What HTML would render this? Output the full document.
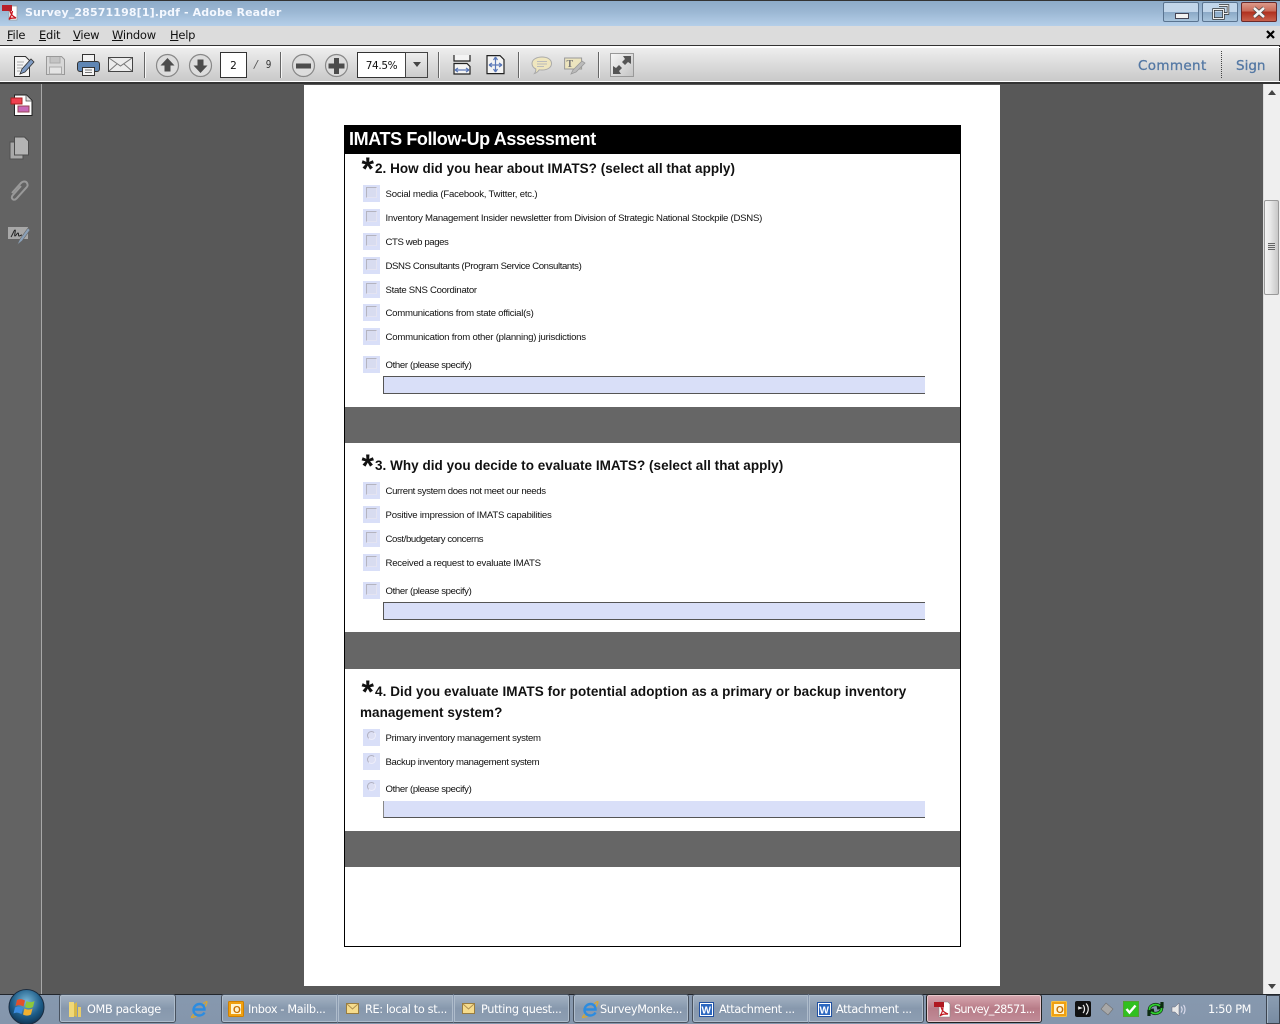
<!DOCTYPE html>
<html><head><meta charset="utf-8"><style>
html,body{margin:0;padding:0}
body{width:1280px;height:1024px;overflow:hidden;position:relative;background:#585858;font-family:"Liberation Sans",sans-serif}
.a,.t,.o,.q,.cb,.rb,.inp,.band,.tb,svg.i{position:absolute}
.t{white-space:nowrap}
.o{left:385.5px;font-size:9.6px;line-height:12px;color:#111;white-space:nowrap;letter-spacing:-.26px;margin-top:1px}
.q{font-size:13.5px;font-weight:bold;line-height:20px;color:#111;white-space:nowrap;letter-spacing:.03px;margin-top:1px}
.star{position:absolute;left:361.500px;font-size:32px;font-weight:bold;line-height:24px;color:#111}
.cb,.rb{left:363px;width:17px;height:17px;background:#d9dff8}
.cb:after{content:"";position:absolute;left:3px;top:2px;width:9px;height:9px;border:1px solid #b4b4c0;border-right-color:#e4e4f2;border-bottom-color:#e4e4f2;background:#d8dcf0}
.rb:after{content:"";position:absolute;left:4px;top:2px;width:7px;height:7px;border:1px solid #b0b0c0;border-right-color:#eeeefa;border-bottom-color:#eeeefa;border-radius:50%;background:#dde0f4}
.inp{left:383px;width:541px;height:16px;background:#d9dff8;border-left:1px solid #555;border-top:1px solid #555;border-bottom:1px solid #555}
.inp.n{border-top:0;height:16px;border-left-color:#888}
.band{left:345px;width:615px;background:#666}
.menu{top:28px;color:#111;font-family:"DejaVu Sans","Liberation Sans",sans-serif;font-size:11.5px;letter-spacing:-.25px}
.menu u{text-decoration:underline}
.tb{top:994px;height:29px;box-sizing:border-box;border:1px solid #48525f;border-radius:3px;background:linear-gradient(#a3b2c3,#8798ad 50%,#8d9eb2);box-shadow:inset 0 0 0 1px #aebccb;color:#fff;font-family:"DejaVu Sans",sans-serif;font-size:11.3px;line-height:29px;white-space:nowrap;letter-spacing:-.35px}
.tb span{position:absolute;top:0}
.sep{position:absolute;top:52px;height:26px;width:1px;background:#666;box-shadow:1px 0 0 #f6f6f6}
</style></head><body>
<!-- title bar -->
<div class="a" style="left:0;top:0;width:1280px;height:26px;background:linear-gradient(#8dabc9,#9ab6d2 40%,#b5cfe9);border-top:1px solid #333;box-sizing:border-box"></div>
<svg class="i" style="left:2px;top:4px" width="18" height="17" viewBox="0 0 18 17"><path d="M7 2h8v14H7z" fill="#fff" stroke="#999" stroke-width=".7"/><rect x="0" y="1" width="10" height="6" fill="#b8202a"/><path d="M8 7c1 3 2 5 6 7-3 0-6 0-7 1.500C9 12 10 10 10.500 7" fill="none" stroke="#c8141e" stroke-width="1.300"/></svg>
<div class="t" style="left:25px;top:5px;font:bold 11px/16px 'DejaVu Sans',sans-serif;color:#f4f8ff;letter-spacing:.13px">Survey_28571198[1].pdf - Adobe Reader</div>
<!-- window buttons -->
<div class="a" style="left:1163px;top:2px;width:36px;height:20px;box-sizing:border-box;border:1px solid #5a7490;border-radius:2px;background:linear-gradient(#c2d6ea 50%,#8aa8c6 50%,#a8c4dc)"></div>
<div class="a" style="left:1175px;top:13px;width:12px;height:4px;background:#f2f2f2;border:1px solid #445"></div>
<div class="a" style="left:1202px;top:2px;width:36px;height:20px;box-sizing:border-box;border:1px solid #5a7490;border-radius:2px;background:linear-gradient(#c2d6ea 50%,#8aa8c6 50%,#a8c4dc)"></div>
<svg class="i" style="left:1212px;top:4px" width="18" height="16"><path d="M7 1.500h9v8h-4M1.500 5.500h10v9h-10z" fill="none" stroke="#333" stroke-width="2.400"/><path d="M7 1.500h9v8h-4M1.500 5.500h10v9h-10z" fill="none" stroke="#eee" stroke-width="1"/></svg>
<div class="a" style="left:1241px;top:2px;width:36px;height:20px;box-sizing:border-box;border:1px solid #6a2a2a;border-radius:2px;background:linear-gradient(#dc9a8a,#c96a58 45%,#b0301e 50%,#c8604c)"></div>
<svg class="i" style="left:1252px;top:6px" width="15" height="13"><path d="M2 2l10 9M12 2L2 11" stroke="#444" stroke-width="4"/><path d="M2 2l10 9M12 2L2 11" stroke="#f4f4f4" stroke-width="2.600"/></svg>
<!-- menu -->
<div class="a" style="left:0;top:26px;width:1280px;height:20px;background:#dcdcdc"></div>
<div class="t menu" style="left:7px"><u>F</u>ile</div>
<div class="t menu" style="left:39px"><u>E</u>dit</div>
<div class="t menu" style="left:73px"><u>V</u>iew</div>
<div class="t menu" style="left:112px"><u>W</u>indow</div>
<div class="t menu" style="left:170px"><u>H</u>elp</div>
<svg class="i" style="left:1266px;top:30px" width="9" height="9"><path d="M1 1l7 7M8 1L1 8" stroke="#000" stroke-width="2.200"/></svg>
<!-- toolbar -->
<div class="a" style="left:0;top:45px;width:1280px;height:39px;box-sizing:border-box;border-top:1px solid #333;border-bottom:2px solid #333;box-shadow:inset 0 1px 0 #fff;background:linear-gradient(#f0f0f0,#c8c8c8)"></div>
<div class="a" style="left:1279px;top:46px;width:1px;height:36px;background:#333"></div>
<div class="a" style="left:0;top:47px;width:1280px;height:1px;background:#fff"></div>
<div class="a" style="left:0;top:81px;width:1280px;height:1px;background:#fff"></div>
<svg class="i" style="left:12px;top:54px" width="24" height="24"><path d="M2.500 2.500h11l4 4v16h-15z" fill="#f4f4f4" stroke="#333"/><path d="M5 8h7M5 11h6M5 14h5M5 17h3" stroke="#aaa"/><path d="M8 20l2-5 9-10 3 3-9 10z" fill="#7f9cc4" stroke="#333" stroke-width=".8"/></svg>
<svg class="i" style="left:45px;top:55px" width="21" height="21"><path d="M1.500 1.500h15l3 3v15h-18z" fill="#d8d8d8" stroke="#999"/><path d="M5 2v6h10V2" fill="#c4c4c4" stroke="#aaa"/><rect x="4.500" y="12" width="12" height="7" fill="#e4e4e4" stroke="#aaa"/></svg>
<svg class="i" style="left:76px;top:52px" width="25" height="26"><rect x="6.500" y="2.500" width="12" height="8" fill="#f2f2f2" stroke="#333"/><rect x="1.500" y="9.500" width="22" height="10" rx="2.500" fill="#5f86b4" stroke="#333"/><rect x="6.500" y="15.500" width="12" height="8" fill="#f6f6f6" stroke="#333"/><path d="M9 18h7M9 20.500h7" stroke="#777"/></svg>
<svg class="i" style="left:108px;top:56px" width="26" height="18"><rect x=".5" y="1.500" width="24" height="14" fill="#ececec" stroke="#444"/><path d="M1 2l11.500 8L24 2M1 15l8-7M24 15l-8-7" fill="none" stroke="#777"/></svg>
<div class="sep" style="left:144px"></div>
<svg class="i" style="left:155px;top:53px" width="25" height="25"><circle cx="12.500" cy="12.500" r="11" fill="#ddd" stroke="#888" stroke-width="1.200"/><path d="M12.500 5l7 7.500h-4v6h-6v-6h-4z" fill="#4c4c4c"/></svg>
<svg class="i" style="left:188px;top:53px" width="25" height="25"><circle cx="12.500" cy="12.500" r="11" fill="#ddd" stroke="#888" stroke-width="1.200"/><path d="M12.500 20l7-7.500h-4v-6h-6v6h-4z" fill="#4c4c4c"/></svg>
<div class="a" style="left:220px;top:52px;width:27px;height:26px;box-sizing:border-box;background:#fff;border:1px solid #333;font:10.500px/26px 'DejaVu Sans';text-align:center;color:#111">2</div>
<div class="t" style="left:254px;top:58px;font:italic 11px/14px 'DejaVu Sans';color:#555">/</div>
<div class="t" style="left:265px;top:58px;font:11px/14px 'DejaVu Sans';color:#333;transform:scaleX(.8)">9</div>
<div class="sep" style="left:280px"></div>
<svg class="i" style="left:291px;top:53px" width="25" height="25"><circle cx="12.500" cy="12.500" r="11" fill="#ddd" stroke="#888" stroke-width="1.200"/><rect x="5" y="10.500" width="15" height="5" fill="#4c4c4c"/></svg>
<svg class="i" style="left:324px;top:53px" width="25" height="25"><circle cx="12.500" cy="12.500" r="11" fill="#ddd" stroke="#888" stroke-width="1.200"/><path d="M10 5h5v5.500h5.500v5H15V21h-5v-5.500H4.500v-5H10z" fill="#4c4c4c"/></svg>
<div class="a" style="left:357px;top:52px;width:49px;height:26px;box-sizing:border-box;background:#fff;border:1px solid #333;font:10.500px/26px 'DejaVu Sans';text-align:center;color:#111;letter-spacing:-.35px">74.5%</div>
<div class="a" style="left:405px;top:52px;width:23px;height:26px;box-sizing:border-box;background:linear-gradient(#eee,#ccc);border:1px solid #444"></div>
<svg class="i" style="left:412px;top:62px" width="10" height="6"><path d="M1 0h8L5 5z" fill="#444"/></svg>
<div class="sep" style="left:438px"></div>
<svg class="i" style="left:453px;top:55px" width="18" height="20"><path d="M1 0v6h16V0" fill="#f4f4f4" stroke="#222" stroke-width="1.200"/><path d="M1 8.500h13l3 3V19H1z" fill="#f4f4f4" stroke="#222" stroke-width="1.200"/><path d="M2 15h14M2 15l3-2M2 15l3 2M16 15l-3-2M16 15l-3 2" stroke="#5a78b8" fill="none" stroke-width="1.200"/></svg>
<svg class="i" style="left:486px;top:55px" width="19" height="20"><path d="M1 .6h13l4 4v14H1z" fill="#f4f4f4" stroke="#222" stroke-width="1.200"/><path d="M9.500 2v15M3 10h13M9.500 2l-2 3M9.500 2l2 3M9.500 17l-2-3M9.500 17l2-3M3 10l3-2M3 10l3 2M16 10l-3-2M16 10l-3 2" stroke="#5a78b8" fill="none" stroke-width="1.200"/></svg>
<div class="sep" style="left:518px"></div>
<svg class="i" style="left:531px;top:56px" width="22" height="19"><path d="M11 1c5.500 0 9.500 2.500 9.500 6.500s-4 6.500-9.500 6.500c-1 0-2 0-2.800-.2C7 15.500 5.500 17 3.500 17.500c1-1.200 1.500-2.500 1.300-4.500C2.500 11.800 1 10 1 7.500 1 3.500 5.500 1 11 1z" fill="#efe6be" stroke="#aaa"/><path d="M6 5.500h10M6 8h10M6 10.500h7" stroke="#bbb"/></svg>
<svg class="i" style="left:564px;top:56px" width="22" height="20"><path d="M.6 2h17v11H.6z" fill="#ece4be" stroke="#999"/><text x="2.500" y="11" font-family="Liberation Serif" font-size="10" font-weight="bold" fill="#777">T</text><path d="M7 18l2-4 9-9 3 2-9 9z" fill="#bbb" stroke="#999" stroke-width=".8"/></svg>
<div class="sep" style="left:598px"></div>
<div class="a" style="left:610px;top:53px;width:24px;height:24px;box-sizing:border-box;border:1px solid #999;background:linear-gradient(135deg,#f6f6f6,#c4c4c4)"></div>
<svg class="i" style="left:612px;top:55px" width="20" height="20"><path d="M11 1h8v8l-3-2-3 3-3-3 3-3zM9 19H1v-8l3 2 3-3 3 3-3 3z" fill="#555"/></svg>
<div class="t" style="left:1138px;top:57px;font:13.500px/18px 'DejaVu Sans';color:#5478a4;letter-spacing:.35px;-webkit-text-stroke:.3px #5478a4">Comment</div>
<div class="a" style="left:1221px;top:51px;width:0;height:27px;border-left:1px dotted #444"></div>
<div class="t" style="left:1236px;top:57px;font:13.500px/18px 'DejaVu Sans';color:#5478a4;-webkit-text-stroke:.3px #5478a4">Sign</div>
<!-- left panel -->
<div class="a" style="left:0;top:84px;width:41px;height:910px;background:#636363"></div>
<div class="a" style="left:41px;top:84px;width:1px;height:910px;background:#a8a8a8"></div>
<svg class="i" style="left:10px;top:94px" width="24" height="26"><path d="M4.500 1h12l5.500 5.500V21.500H4.500z" fill="#fff" stroke="#222"/><path d="M16 1v6h6" fill="#ddd" stroke="#444" stroke-width=".7"/><rect x="1" y="4" width="11" height="6" fill="#f04050" stroke="#a22"/><rect x="8" y="12" width="11" height="6" fill="#c868b8" stroke="#945"/></svg>
<svg class="i" style="left:9px;top:136px" width="22" height="24"><path d="M1 6h13v17H1z" fill="#a8a8a8" stroke="#505050"/><path d="M5.500 1h10l4 4v14H5.500z" fill="#b4b4b4" stroke="#4c4c4c"/></svg>
<svg class="i" style="left:8px;top:179px" width="22" height="25"><path d="M4 14l9-10c2-2 5-2 6 0s1 3-1 5l-9.500 10.500c-1.500 1.500-3 1.500-4 .5s-1-2.500.5-4l8-9" fill="none" stroke="#999" stroke-width="2"/></svg>
<svg class="i" style="left:7px;top:226px" width="24" height="20"><path d="M1 1h20v12H1z" fill="#a8a8a8"/><path d="M4 11c2-3 3-7 4-7s-1 6 0 6 2-3 3-3 0 3 1 3 2-1 3-1" fill="none" stroke="#222"/><path d="M10 19l3-6 8-11 2 2-8 11z" fill="#8aa0b8" stroke="#666" stroke-width=".6"/></svg>
<!-- scrollbar -->
<div class="a" style="left:1263px;top:84px;width:17px;height:910px;background:#efefef;border-left:1px solid #ddd;box-sizing:border-box"></div>
<svg class="i" style="left:1268px;top:90px" width="8" height="6"><path d="M0 5h8L4 0z" fill="#444"/></svg>
<svg class="i" style="left:1268px;top:984px" width="8" height="6"><path d="M0 0h8L4 5z" fill="#444"/></svg>
<div class="a" style="left:1264px;top:200px;width:15px;height:95px;box-sizing:border-box;border:1px solid #999;border-radius:2px;background:linear-gradient(90deg,#f4f4f4,#e8e8e8 40%,#c8c8c8)"></div>
<div class="a" style="left:1268px;top:243px;width:7px;height:7px;background:repeating-linear-gradient(#666 0 1px,#ddd 1px 2px)"></div>
<!-- page -->
<div class="a" style="left:304px;top:85px;width:696px;height:901px;background:#fff"></div>
<div class="a" style="left:344px;top:125px;width:617px;height:822px;box-sizing:border-box;border:1px solid #000;background:#fff"></div>
<div class="a" style="left:345px;top:126px;width:615px;height:28px;background:#000"></div>
<div class="t" style="left:349px;top:128px;font-size:18px;font-weight:bold;line-height:22px;color:#fff;letter-spacing:-.39px">IMATS Follow-Up Assessment</div>

<div class="star" style="top:157px">*</div>
<div class="q" style="left:375px;top:158px">2. How did you hear about IMATS? (select all that apply)</div>
<div class="cb" style="top:185px"></div><div class="o" style="top:187.500px;letter-spacing:-.21px">Social media (Facebook, Twitter, etc.)</div>
<div class="cb" style="top:209px"></div><div class="o" style="top:211.500px">Inventory Management Insider newsletter from Division of Strategic National Stockpile (DSNS)</div>
<div class="cb" style="top:233px"></div><div class="o" style="top:235.500px;letter-spacing:-.41px">CTS web pages</div>
<div class="cb" style="top:257px"></div><div class="o" style="top:259.500px;letter-spacing:-.39px">DSNS Consultants (Program Service Consultants)</div>
<div class="cb" style="top:281px"></div><div class="o" style="top:283.500px;letter-spacing:-.3px">State SNS Coordinator</div>
<div class="cb" style="top:304px"></div><div class="o" style="top:306.500px">Communications from state official(s)</div>
<div class="cb" style="top:328px"></div><div class="o" style="top:330.500px;letter-spacing:-.22px">Communication from other (planning) jurisdictions</div>
<div class="cb" style="top:356px"></div><div class="o" style="top:358.500px;letter-spacing:-.36px">Other (please specify)</div>
<div class="inp" style="top:376px"></div>
<div class="band" style="top:407px;height:36px"></div>

<div class="star" style="top:454px">*</div>
<div class="q" style="left:375px;top:455px">3. Why did you decide to evaluate IMATS? (select all that apply)</div>
<div class="cb" style="top:482px"></div><div class="o" style="top:484.500px;letter-spacing:-.36px">Current system does not meet our needs</div>
<div class="cb" style="top:506px"></div><div class="o" style="top:508.500px;letter-spacing:-.21px">Positive impression of IMATS capabilities</div>
<div class="cb" style="top:530px"></div><div class="o" style="top:532.500px;letter-spacing:-.39px">Cost/budgetary concerns</div>
<div class="cb" style="top:554px"></div><div class="o" style="top:556.500px;letter-spacing:-.23px">Received a request to evaluate IMATS</div>
<div class="cb" style="top:582px"></div><div class="o" style="top:584.500px;letter-spacing:-.36px">Other (please specify)</div>
<div class="inp" style="top:602px"></div>
<div class="band" style="top:632px;height:37px"></div>

<div class="star" style="top:680px">*</div>
<div class="q" style="left:375px;top:681px;letter-spacing:.07px">4. Did you evaluate IMATS for potential adoption as a primary or backup inventory</div>
<div class="q" style="left:360px;top:702px">management system?</div>
<div class="rb" style="top:729px"></div><div class="o" style="top:731.500px;letter-spacing:-.32px">Primary inventory management system</div>
<div class="rb" style="top:753px"></div><div class="o" style="top:755.500px;letter-spacing:-.34px">Backup inventory management system</div>
<div class="rb" style="top:780px"></div><div class="o" style="top:782.500px;letter-spacing:-.36px">Other (please specify)</div>
<div class="inp n" style="top:801px"></div>
<div class="band" style="top:831px;height:36px"></div>

<!-- taskbar -->
<div class="a" style="left:0;top:994px;width:1280px;height:30px;background:linear-gradient(#8798ae,#8496ac);border-top:1px solid #22262c;box-sizing:border-box"></div>
<svg class="i" style="left:8px;top:989px" width="38" height="35"><defs><radialGradient id="orb" cx=".5" cy=".35" r=".7"><stop offset="0" stop-color="#7ab8d8"/><stop offset=".6" stop-color="#1d5c88"/><stop offset="1" stop-color="#0c2c48"/></radialGradient></defs><circle cx="18.500" cy="18" r="17.500" fill="url(#orb)" stroke="#1a2c40"/><path d="M9 11c3-1.500 5-1 8 .5l-1.500 6c-3-1.500-5-2-8-.5z" fill="#e2502c"/><path d="M18.500 12c3 1.500 5 1.500 8 0l-1.500 6c-3 1.500-5 1.500-8 0z" fill="#8cc83c"/><path d="M7 18.500c3-1.500 5-1 8 .5l-1.500 6c-3-1.500-5-2-8-.5z" fill="#3c8ce0"/><path d="M16.500 19.500c3 1.500 5 1.500 8 0l-1.500 6c-3 1.500-5 1.500-8 0z" fill="#f0b030"/></svg>
<div class="tb" style="left:59px;width:117px"><span style="left:27px">OMB package</span></div>
<svg class="i" style="left:68px;top:1001px" width="14" height="17"><path d="M1 1h5v15H1z" fill="#f0d878"/><path d="M6 3l3-2v15l-3-1z" fill="#d8b848"/><path d="M10 6h3v10h-3z" fill="#e8cc68"/></svg>
<svg class="i" style="left:190px;top:1000px" width="18" height="18"><path d="M13 4c2-2 4-3 4-2s-1 3-2 5M5 13C2.500 16 1 17 1.500 17.500S5 17 8 15" fill="none" stroke="#d8a830" stroke-width="1.200"/><path d="M4.500 9.500h10c0-3.500-2-5.500-5-5.500s-6 2.500-6 6 3 5.500 5.500 5.500 4.500-1 5.500-3" fill="none" stroke="#2c8ce0" stroke-width="2.400"/></svg>
<div class="tb" style="left:221px;width:117px;border-radius:3px 0 0 3px;border-right-color:#8a9ab0"><span style="left:26px">Inbox - Mailb...</span></div>
<div class="tb" style="left:337px;width:117px;border-radius:0;border-left-color:#8a9ab0;border-right-color:#8a9ab0"><span style="left:27px">RE: local to st...</span></div>
<div class="tb" style="left:453px;width:117px;border-radius:0 3px 3px 0;border-left-color:#8a9ab0"><span style="left:27px">Putting quest...</span></div>
<svg class="i" style="left:228px;top:1001px" width="16" height="16"><rect x=".5" y=".5" width="15" height="15" rx="1" fill="#f0a010" stroke="#d08000"/><rect x="3" y="3" width="10" height="10" fill="#fff4d0"/><text x="5" y="12" font-family="Liberation Sans" font-size="10" font-weight="bold" fill="#c87000">O</text></svg>
<svg class="i" style="left:346px;top:1003px" width="13" height="11"><rect x=".5" y=".5" width="12" height="10" fill="#f6dc8c" stroke="#987c40"/><path d="M1 1l5.500 5L12 1" fill="none" stroke="#b09050"/></svg>
<svg class="i" style="left:462px;top:1003px" width="13" height="11"><rect x=".5" y=".5" width="12" height="10" fill="#f6dc8c" stroke="#987c40"/><path d="M1 1l5.500 5L12 1" fill="none" stroke="#b09050"/></svg>
<div class="tb" style="left:573px;width:116px"><span style="left:26px">SurveyMonke...</span></div>
<svg class="i" style="left:581px;top:1000px" width="18" height="18"><path d="M13 4c2-2 4-3 4-2s-1 3-2 5M5 13C2.500 16 1 17 1.500 17.500S5 17 8 15" fill="none" stroke="#d8a830" stroke-width="1.200"/><path d="M4.500 9.500h10c0-3.500-2-5.500-5-5.500s-6 2.500-6 6 3 5.500 5.500 5.500 4.500-1 5.500-3" fill="none" stroke="#2c8ce0" stroke-width="2.400"/></svg>
<div class="tb" style="left:692px;width:117px;border-radius:3px 0 0 3px;border-right-color:#8a9ab0"><span style="left:26px">Attachment ...</span></div>
<div class="tb" style="left:808px;width:116px;border-radius:0 3px 3px 0;border-left-color:#8a9ab0"><span style="left:27px">Attachment ...</span></div>
<svg class="i" style="left:699px;top:1002px" width="15" height="15"><rect x=".5" y=".5" width="14" height="14" fill="#fff" stroke="#2050a0"/><rect x="2" y="2" width="11" height="11" fill="#2c68c0"/><text x="2.500" y="11.500" font-family="Liberation Sans" font-size="10" font-weight="bold" fill="#fff">W</text></svg>
<svg class="i" style="left:817px;top:1002px" width="15" height="15"><rect x=".5" y=".5" width="14" height="14" fill="#fff" stroke="#2050a0"/><rect x="2" y="2" width="11" height="11" fill="#2c68c0"/><text x="2.500" y="11.500" font-family="Liberation Sans" font-size="10" font-weight="bold" fill="#fff">W</text></svg>
<div class="tb" style="left:926px;width:116px;background:linear-gradient(#d8a8b0,#b87c88 50%,#c08c98);border-color:#222;box-shadow:inset 0 0 0 1px #e8c8cc"><span style="left:27px;letter-spacing:-.75px">Survey_28571...</span></div>
<svg class="i" style="left:934px;top:1001px" width="17" height="17"><path d="M5 1h9l2 2v13H5z" fill="#fff" stroke="#888" stroke-width=".6"/><rect x="0" y="1" width="10" height="5" fill="#b01820"/><path d="M7 6c1 3 2 5 7 7-4 0-6 0-8 2 2-3 3-6 3-9" fill="none" stroke="#c01820" stroke-width="1.200"/></svg>
<!-- tray -->
<svg class="i" style="left:1051px;top:1001px" width="16" height="16"><rect x=".5" y=".5" width="15" height="15" rx="1" fill="#f0a010" stroke="#f8c040"/><rect x="3" y="3" width="10" height="10" fill="#fff4d0"/><text x="5" y="12" font-family="Liberation Sans" font-size="10" font-weight="bold" fill="#c87000">O</text></svg>
<svg class="i" style="left:1075px;top:1001px" width="16" height="16"><rect width="16" height="16" rx="2" fill="#111"/><path d="M3 8l3-1-3-1M8 4c2 2 2 6 0 8M11 2.500c3 3 3 8 0 11" fill="none" stroke="#eee" stroke-width="1.200"/></svg>
<svg class="i" style="left:1100px;top:1002px" width="14" height="14"><path d="M6 1l7 6-5 6-7-6z" fill="#a8a8a8" stroke="#707070" stroke-width=".6"/></svg>
<svg class="i" style="left:1123px;top:1001px" width="16" height="16"><rect x=".5" y=".5" width="15" height="15" fill="#30c020" stroke="#50a030"/><path d="M3.500 8l3 3.500 6-7" fill="none" stroke="#fff" stroke-width="2.400"/></svg>
<svg class="i" style="left:1147px;top:1001px" width="17" height="16"><path d="M2.500 9C2 4 9 2 13 5M14.500 7c.5 5-6.500 7-10.500 4M10 7l5-1V1M7 9l-5 1v5" fill="none" stroke="#0c2c10" stroke-width="3.200"/><path d="M2.500 9C2 4 9 2 13 5M14.500 7c.5 5-6.500 7-10.500 4" fill="none" stroke="#30d030" stroke-width="1.800"/></svg>
<svg class="i" style="left:1171px;top:1002px" width="16" height="15"><path d="M1 5h3l4-4v13l-4-4H1z" fill="#e8e8e8" stroke="#667" stroke-width=".5"/><path d="M10 4.500c1.500 2 1.500 4 0 6M12.500 3c2 2.500 2 6.500 0 9" fill="none" stroke="#dde" stroke-width="1.100"/></svg>
<div class="t" style="left:1208px;top:1002px;font:11.300px/15px 'DejaVu Sans';color:#fff;letter-spacing:-.35px">1:50 PM</div>
<div class="a" style="left:1266px;top:995px;width:14px;height:29px;box-sizing:border-box;border:1px solid #3c4450;background:linear-gradient(#8b9db2,#788ba2);box-shadow:inset 1px 0 0 #a8b8c8"></div>
</body></html>
